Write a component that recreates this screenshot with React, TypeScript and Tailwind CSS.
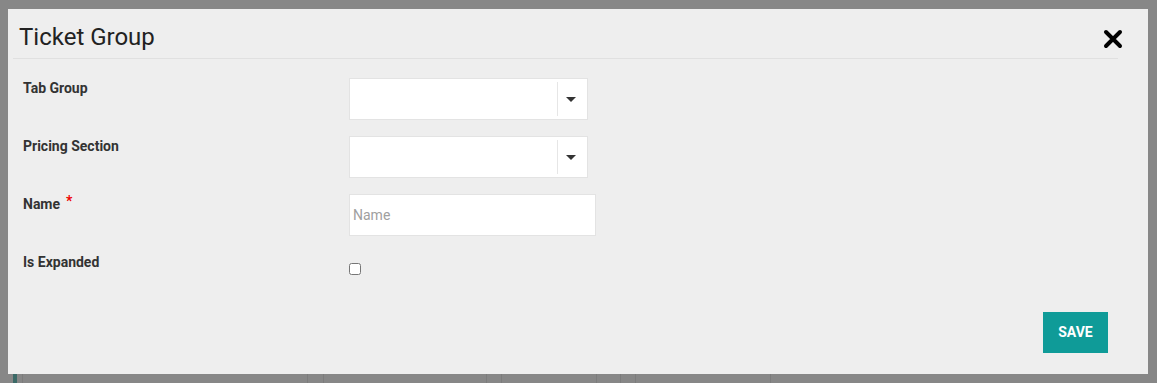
import type { ReactNode } from 'react';

function Label({ children, required }: { children: ReactNode; required?: boolean }) {
  return (
    <div className="w-[341px] shrink-0 pl-[15px] text-[14px] leading-[20px] font-bold text-[#333]">
      {children}
      {required && <span className="ml-[6px] text-[#e00] relative top-[-3px]">*</span>}
    </div>
  );
}

function SelectBox() {
  return (
    <div className="w-[239px] h-[42px] bg-white border border-[#e3e3e3] flex items-stretch">
      <div className="flex-1" />
      <div className="my-[3px] border-l border-[#e6e6e6] w-[30px] flex items-center justify-center pr-[4px]">
        <svg width="10" height="5" viewBox="0 0 10 5">
          <path d="M0 0 L10 0 L5 5 Z" fill="#333" />
        </svg>
      </div>
    </div>
  );
}

const lines = [284, 15, 162, 14, 94, 23, 14, 134];

export default function App() {
  return (
    <div className="w-[1157px] h-[383px] bg-[#878787] flex flex-col overflow-hidden" style={{ fontFamily: 'Roboto, "Liberation Sans", sans-serif' }}>
      <div className="ml-[8px] mt-[9px] w-[1140px] h-[365px] bg-[#eeeeee] flex flex-col shrink-0">
        <div className="h-[49px] flex items-start justify-between">
          <h1 className="pl-[11px] pt-[14px] text-[24px] leading-[28px] font-normal text-[#222]">Ticket Group</h1>
          <button className="mt-[20px] mr-[25px] w-[20px] h-[20px]" aria-label="Close">
            <svg width="20" height="20" viewBox="0 0 20 20">
              <path d="M3 3 L17 17 M17 3 L3 17" stroke="#000" strokeWidth="4" strokeLinecap="round" />
            </svg>
          </button>
        </div>
        <div className="ml-[5px] mr-[30px] border-t border-[#e0e0e0]" />
        <div className="pt-[19px] flex flex-col">
          <div className="h-[58px] flex items-start">
            <Label>Tab Group</Label>
            <SelectBox />
          </div>
          <div className="h-[58px] flex items-start">
            <Label>Pricing Section</Label>
            <SelectBox />
          </div>
          <div className="h-[58px] flex items-start">
            <Label required>Name</Label>
            <input
              placeholder="Name"
              className="w-[247px] h-[42px] bg-white border border-[#e3e3e3] pl-[3px] text-[14px] text-[#333] placeholder:text-[#a0a0a0] outline-none"
            />
          </div>
          <div className="h-[58px] flex items-start">
            <Label>Is Expanded</Label>
            <input type="checkbox" className="mt-[11px] m-0 w-[12px] h-[12px]" />
          </div>
        </div>
        <div className="pt-[2px] flex justify-end pr-[40px]">
          <button className="w-[65px] h-[41px] bg-[#0f9b98] text-white text-[14px] font-bold">SAVE</button>
        </div>
      </div>
      <div className="h-[9px] flex shrink-0">
        <div className="w-[13px]" />
        <div className="w-[4px] bg-[#3c6a67]" />
        <div className="w-[6px] border-r border-[#7c7c7c]" />
        {lines.map((w, i) => (
          <div key={i} className="border-r border-[#7c7c7c]" style={{ width: w + 1 }} />
        ))}
      </div>
    </div>
  );
}
